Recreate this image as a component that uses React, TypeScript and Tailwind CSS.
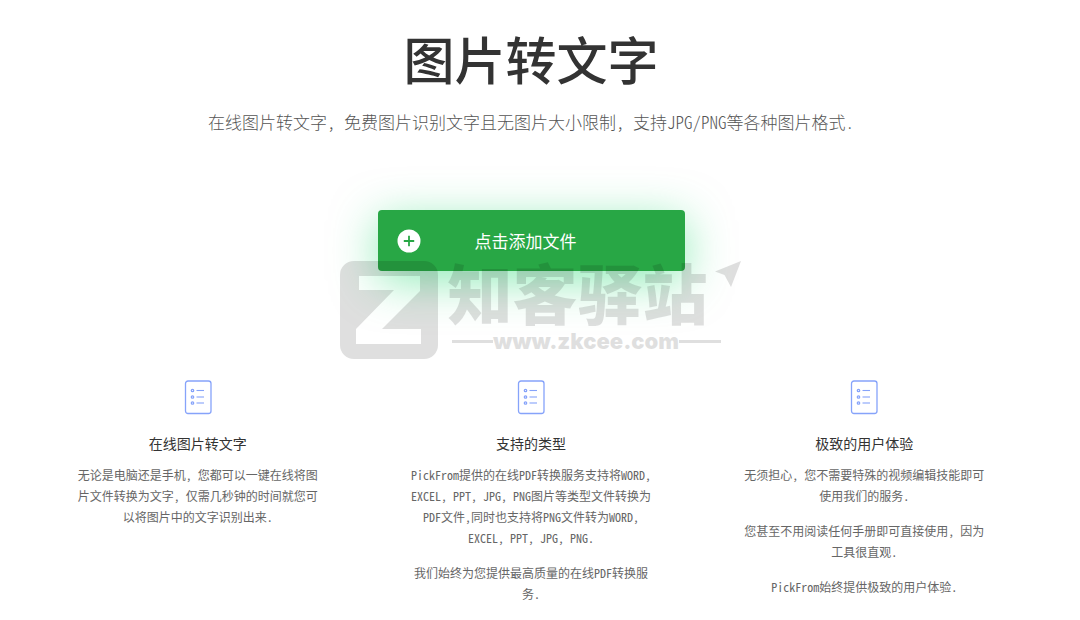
const features = [
  {
    title: "在线图片转文字",
    paragraphs: [["无论是电脑还是手机, 您都可以一键在线将图", "片文件转换为文字, 仅需几秒钟的时间就您可", "以将图片中的文字识别出来."]],
  },
  {
    title: "支持的类型",
    paragraphs: [
      [
        "PickFrom提供的在线PDF转换服务支持将WORD,",
        "EXCEL, PPT, JPG, PNG图片等类型文件转换为",
        "PDF文件,同时也支持将PNG文件转为WORD,",
        "EXCEL, PPT, JPG, PNG.",
      ],
      ["我们始终为您提供最高质量的在线PDF转换服", "务."],
    ],
  },
  {
    title: "极致的用户体验",
    paragraphs: [
      ["无须担心, 您不需要特殊的视频编辑技能即可", "使用我们的服务."],
      ["您甚至不用阅读任何手册即可直接使用, 因为", "工具很直观."],
      ["PickFrom始终提供极致的用户体验."],
    ],
  },
];

function ListIcon() {
  return (
    <svg width="28" height="36" viewBox="0 0 28 36" fill="none" stroke="#86a3fa" className="mx-auto" aria-hidden="true">
      <rect x="1.5" y="2" width="25.5" height="32.5" rx="2.5" strokeWidth="1.3" />
      {[11.5, 18, 24].map((y) => (
        <g key={y}>
          <circle cx="8.5" cy={y} r="1.2" strokeWidth="1.3" />
          <path d={`M12.5 ${y}h7.5`} strokeWidth="1.1" />
        </g>
      ))}
    </svg>
  );
}

function PlusIcon() {
  return (
    <svg width="24" height="24" viewBox="0 0 24 24" className="shrink-0" aria-hidden="true">
      <circle cx="12" cy="12" r="11.5" fill="#fff" />
      <path d="M12 6.8v10.4M6.8 12h10.4" stroke="#28a745" strokeWidth="1.8" />
    </svg>
  );
}

function Watermark() {
  return (
    <div className="pointer-events-none absolute left-[-38px] top-[51px] flex select-none items-start gap-[10px] opacity-[0.12]" aria-hidden="true">
      <svg width="98" height="98" viewBox="0 0 98 98" className="shrink-0">
        <path
          fillRule="evenodd"
          d="M14 0h70a14 14 0 0 1 14 14v70a14 14 0 0 1-14 14H14A14 14 0 0 1 0 84V14A14 14 0 0 1 14 0ZM19 15v14h35L16 68v15h65V68H42l38-38V15Z"
        />
      </svg>
      <div className="w-[273px]">
        <div className="whitespace-nowrap text-left text-[65px] font-black leading-[60px]">知客驿站</div>
        <div className="mt-2 flex items-center pl-1 font-[Inter] text-[22px] font-black leading-[24px]">
          <span className="h-[3px] flex-1 bg-black" />
          www.zkcee.com
          <span className="h-[3px] flex-1 bg-black" />
        </div>
      </div>
      <svg width="26" height="26" viewBox="0 0 26 26" className="-ml-4 shrink-0">
        <path d="M26 0 0 10.5l9.5 3.5 6.5 12Z" />
      </svg>
    </div>
  );
}

export default function App() {
  return (
    <main className="min-h-screen bg-white pr-[18px] font-['Noto_Sans_CJK_SC',sans-serif] [font-feature-settings:'hwid']">
      <div className="mx-auto max-w-[1000px] pt-7 text-center">
        <h1 className="text-[51px] font-medium leading-[60px] text-[#333]">图片转文字</h1>
        <p className="mt-[22px] text-[17px] font-light leading-[24px] text-[#555]">
          在线图片转文字, 免费图片识别文字且无图片大小限制, 支持JPG/PNG等各种图片格式.
        </p>

        <div className="relative mx-auto mt-[76px] w-[307px]">
          <button
            type="button"
            className="flex h-[61px] w-full cursor-pointer items-center rounded bg-[#28a745] pl-[19px] pr-[54px] text-[17px] text-white shadow-[0_10px_45px_rgba(30,215,110,0.5)]"
          >
            <PlusIcon />
            <span className="flex-1">点击添加文件</span>
          </button>
          <Watermark />
        </div>

        <div className="mt-[108px] grid grid-cols-3">
          {features.map((f) => (
            <section key={f.title} className="px-2">
              <ListIcon />
              <h2 className="mb-[10px] mt-[18px] text-[14px] leading-[21px] text-[#333]">{f.title}</h2>
              {f.paragraphs.map((lines) => (
                <p key={lines[0]} className="mb-[14px] text-[12px] leading-[21px] text-[#666]">
                  {lines.map((line) => (
                    <span key={line} className="block">{line}</span>
                  ))}
                </p>
              ))}
            </section>
          ))}
        </div>
      </div>
    </main>
  );
}
